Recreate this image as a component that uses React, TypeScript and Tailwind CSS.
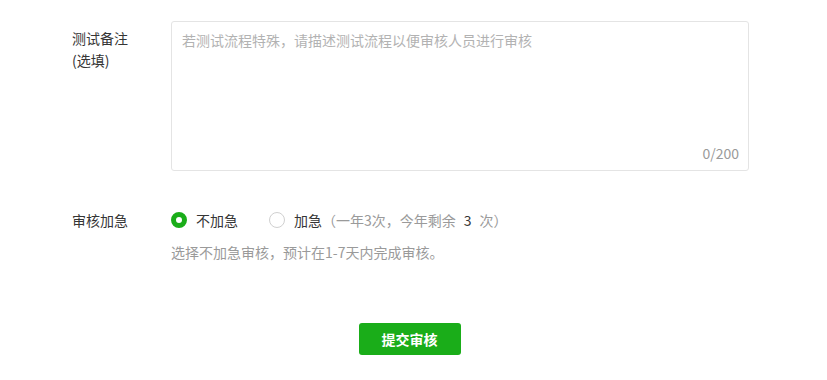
const font = "font-['Noto_Sans_CJK_SC','Noto_Sans',sans-serif]";

const App = () => {
  return (
    <div className={`w-[827px] h-[380px] bg-white ${font} text-[14px] text-[#353535]`}>
      <div className="pl-[72px] pt-[21px]">
        {/* 测试备注 */}
        <div className="flex">
          <div className="w-[99px] pt-[6px] leading-[22px]">
            测试备注
            <br />
            (选填)
          </div>
          <div className="relative w-[578px] h-[150px] border border-[#e4e4e4] rounded-[3px]">
            <div className="px-[10px] pt-[7px] leading-[22px] text-[#b2b2b2]">
              若测试流程特殊，请描述测试流程以便审核人员进行审核
            </div>
            <div className="absolute right-[9px] bottom-[6px] leading-[22px] text-[#9a9a9a]">0/200</div>
          </div>
        </div>

        {/* 审核加急 */}
        <div className="flex mt-[38px]">
          <div className="w-[99px] leading-[22px]">审核加急</div>
          <div>
            <div className="flex items-center leading-[22px]">
              <span className="w-[16px] h-[16px] rounded-full border-[5px] border-[#1aad19] bg-white" />
              <span className="ml-[9px]">不加急</span>
              <span className="ml-[31px] w-[16px] h-[16px] rounded-full border border-[#d0d0d0]" />
              <span className="ml-[9px]">加急</span>
              <span className="text-[#9a9a9a]">（一年3次，今年剩余</span>
              <span className="mx-[8px] text-[#353535]">3</span>
              <span className="text-[#9a9a9a]">次）</span>
            </div>
            <div className="mt-[10px] leading-[22px] text-[#9a9a9a]">
              选择不加急审核，预计在1-7天内完成审核。
            </div>
          </div>
        </div>
      </div>

      <div className="flex justify-center mt-[60px]">
        <button className="w-[102px] h-[32px] rounded-[3px] bg-[#1aad19] text-white text-[14px] font-bold ml-[-8px]">
          提交审核
        </button>
      </div>
    </div>
  );
};

export default App;
